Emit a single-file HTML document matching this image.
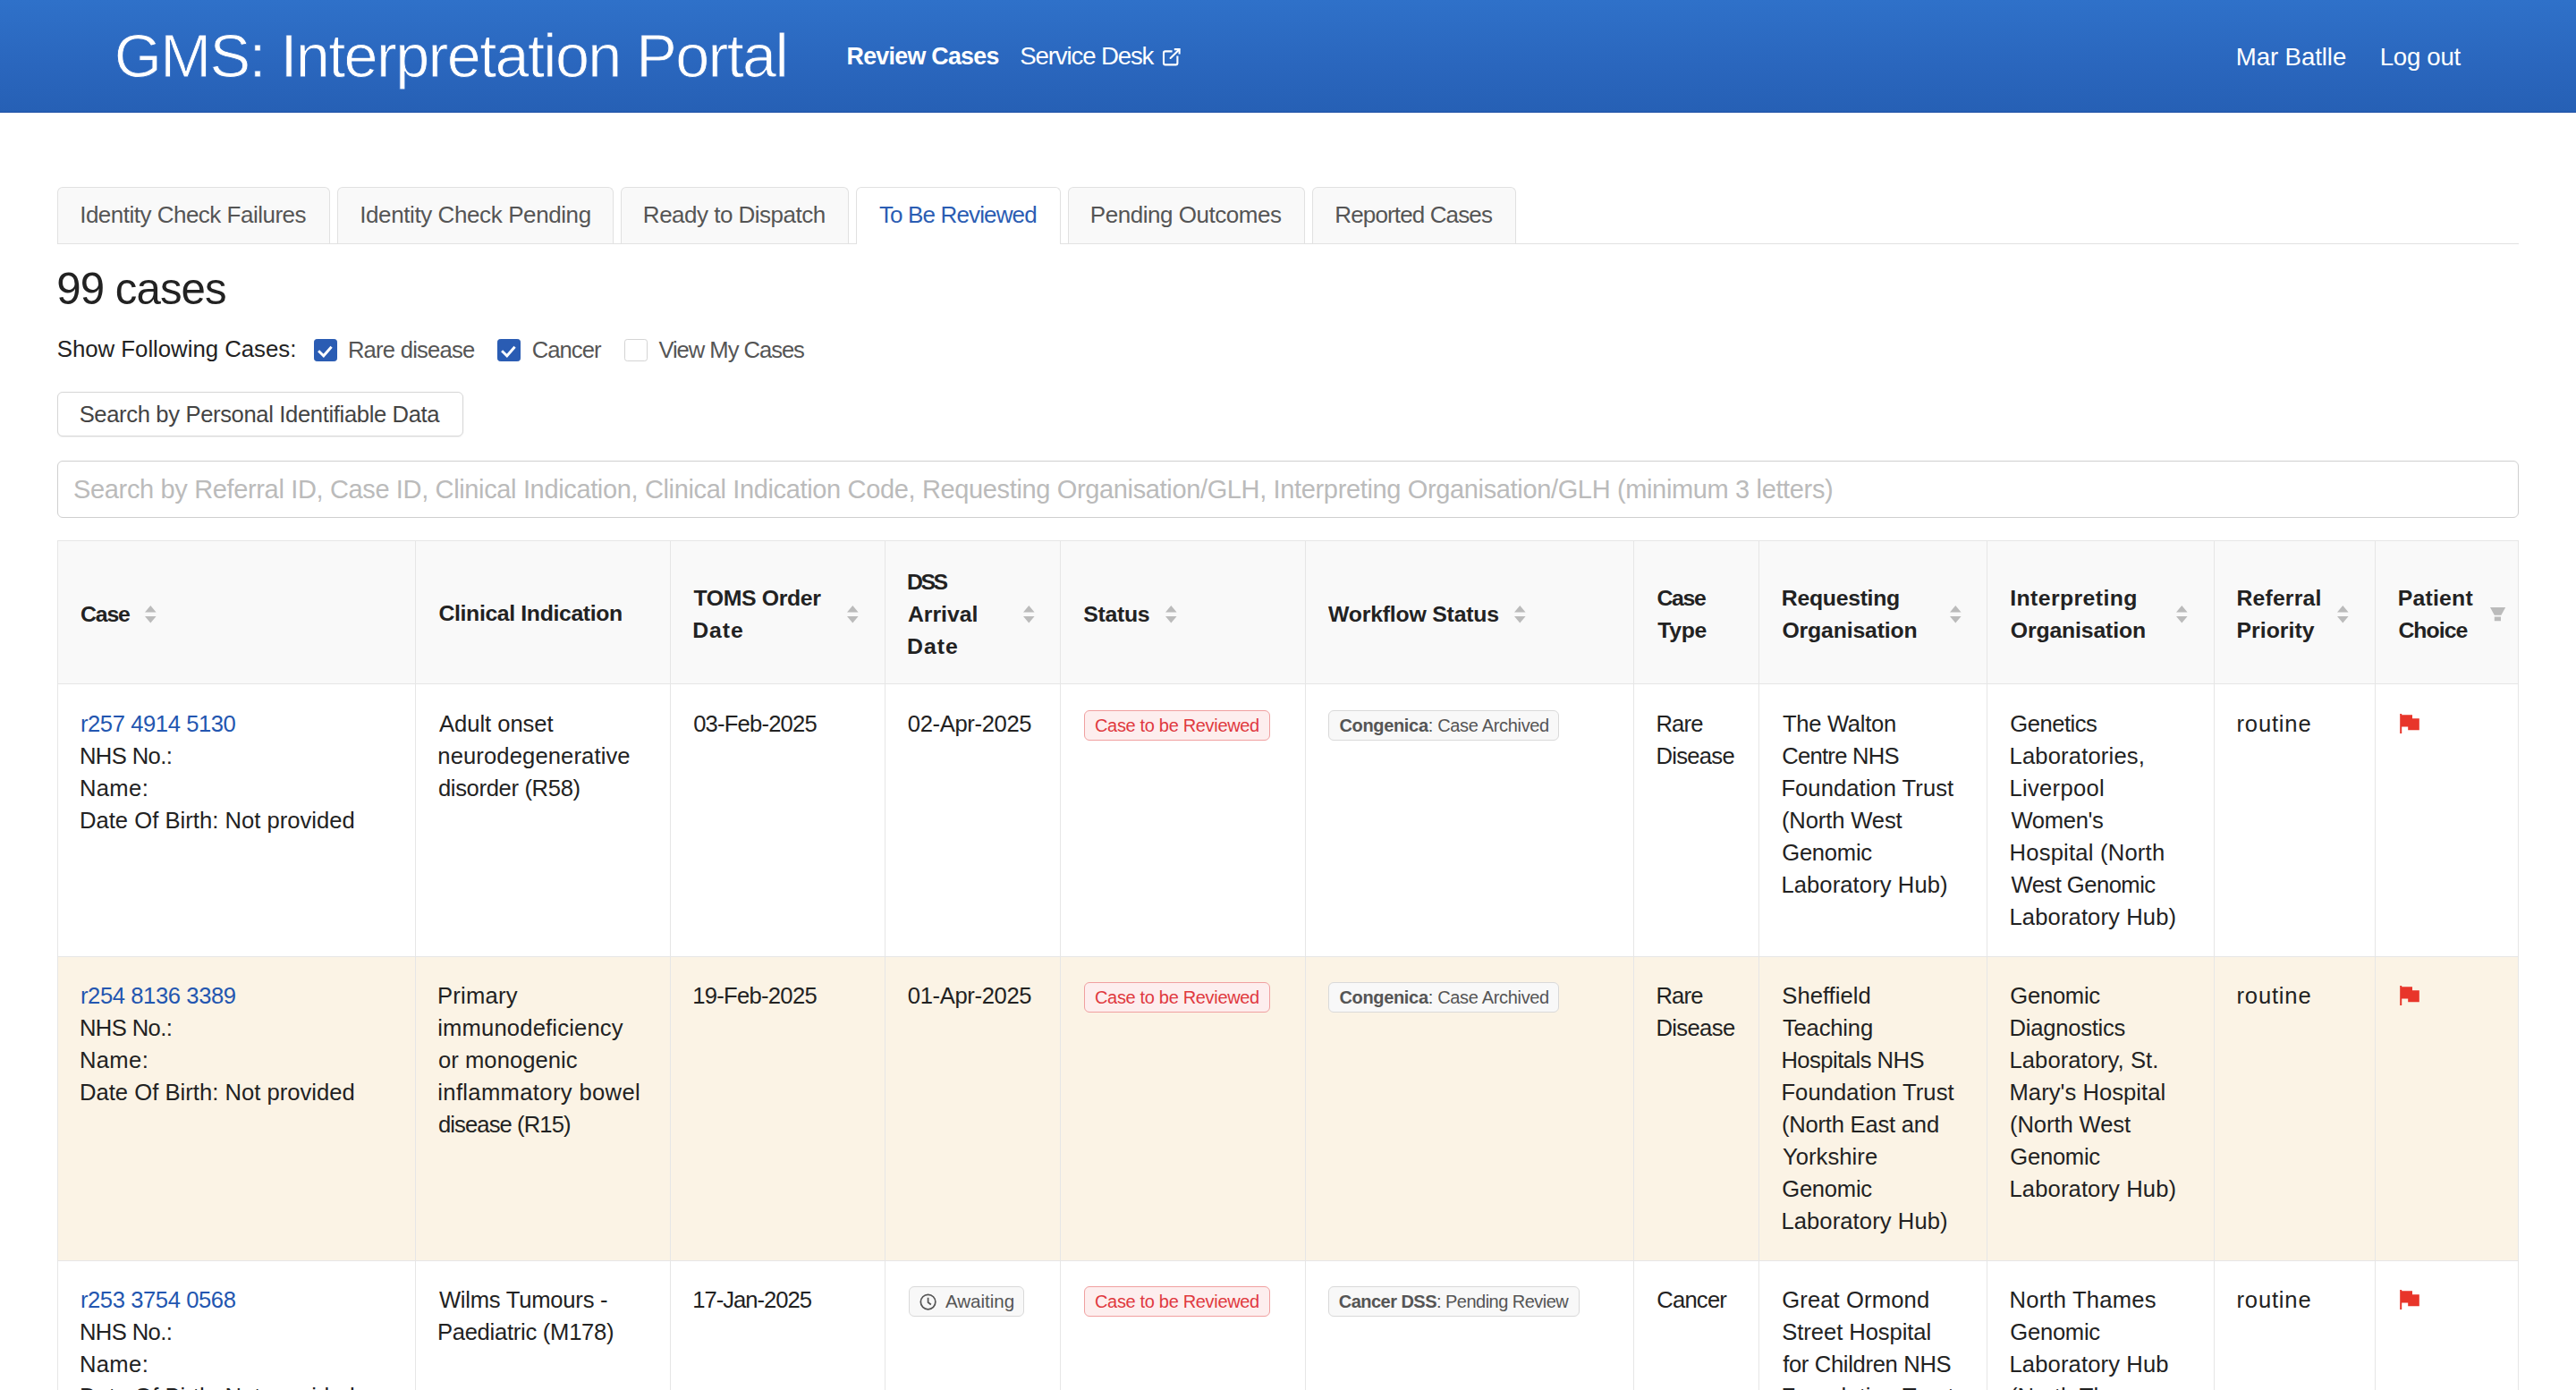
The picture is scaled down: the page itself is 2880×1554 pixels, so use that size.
<!DOCTYPE html>
<html><head><meta charset='utf-8'><title>GMS: Interpretation Portal</title><style>
html,body{margin:0;padding:0;background:#fff;}
body{width:1440px;height:777px;overflow:hidden;position:relative;font-family:"Liberation Sans",sans-serif;}
@media (min-width:2000px){html{zoom:2;}}
.t{position:absolute;white-space:nowrap;}
b{font-weight:700;}
.ic{position:absolute;overflow:visible;}
#hdr{position:absolute;left:0;top:0;width:1440px;height:62.5px;background:linear-gradient(#2f71c9,#2a66bd 60%,#2660b5);border-bottom:0.5px solid #1c4fa6;}
.tab{position:absolute;top:104.5px;height:31.5px;box-sizing:border-box;background:#f9f9f9;border:0.5px solid #e1e1e1;border-bottom:none;border-radius:3px 3px 0 0;}
.tab.act{background:#fff;height:32px;}
.cb{position:absolute;top:189.5px;width:12.9px;height:12.4px;box-sizing:border-box;border:0.5px solid #d4d4d4;border-radius:1.6px;background:#fff;}
.cb.on{background:#2a5cb3;border-color:#2a5cb3;}
.cb svg{position:absolute;left:-0.5px;top:-0.5px;}
#btn{position:absolute;left:32px;top:219px;width:227px;height:25px;box-sizing:border-box;border:0.5px solid #d6d6d6;border-radius:3px;background:#fff;box-shadow:0 0.5px 1px rgba(0,0,0,0.06);}
#inp{position:absolute;left:32px;top:257.5px;width:1376px;height:32px;box-sizing:border-box;border:0.5px solid #cfcfcf;border-radius:3px;background:#fff;}
.hl{position:absolute;left:32px;width:1376px;height:0.5px;background:#e6e6e6;}
.vl{position:absolute;top:302px;width:0.5px;height:600px;background:#e6e6e6;}
.bdg{position:absolute;height:17px;box-sizing:border-box;border-radius:3px;}
.bdg.red{background:#fdeeee;border:0.5px solid #f0a0a0;}
.bdg.grey{background:#f8f8f8;border:0.5px solid #d9d9d9;}
</style></head><body>
<div id='hdr'></div>
<svg class='ic' style='left:645px;top:22.5px' width='20' height='17.5' viewBox='0 0 20 17.5'><path d='M10.3 6.2H6.4Q5.5 6.2 5.5 7.1V12.8Q5.5 13.7 6.4 13.7H12.3Q13.2 13.7 13.2 12.8V8.7' fill='none' stroke='#fff' stroke-width='1.05'/><path d='M11.4 5.05H14.3V7.7' fill='none' stroke='#fff' stroke-width='1.05'/><path d='M14.1 5.25L9.3 10' fill='none' stroke='#fff' stroke-width='1.05' stroke-linecap='round'/></svg>
<div style='position:absolute;left:32px;top:136px;width:1376px;height:0.5px;background:#e2e2e2'></div>
<div class='tab' style='left:32px;width:152.50px'></div>
<div class='tab' style='left:188.5px;width:154.50px'></div>
<div class='tab' style='left:347px;width:127.50px'></div>
<div class='tab act' style='left:478.5px;width:114.50px'></div>
<div class='tab' style='left:597px;width:132.50px'></div>
<div class='tab' style='left:733.5px;width:114.00px'></div>
<div class='cb on' style='left:175.6px'><svg width='13' height='13' viewBox='0 0 13 13'><path d='M2.55 6.65L5.4 9.4L9.8 4.35' fill='none' stroke='#fff' stroke-width='1.45'/></svg></div>
<div class='cb on' style='left:278px'><svg width='13' height='13' viewBox='0 0 13 13'><path d='M2.55 6.65L5.4 9.4L9.8 4.35' fill='none' stroke='#fff' stroke-width='1.45'/></svg></div>
<div class='cb' style='left:349.2px'></div>
<div id='btn'></div><div id='inp'></div>
<div style='position:absolute;left:32px;top:302px;width:1376px;height:80px;background:#f9f9f9'></div>
<div style='position:absolute;left:32px;top:534.5px;width:1376px;height:170.0px;background:#fbf3e5'></div>
<div class='hl' style='top:302px'></div>
<div class='hl' style='top:382px'></div>
<div class='hl' style='top:534.5px'></div>
<div class='hl' style='top:704.5px'></div>
<div class='vl' style='left:32px'></div>
<div class='vl' style='left:232px'></div>
<div class='vl' style='left:374.5px'></div>
<div class='vl' style='left:494.5px'></div>
<div class='vl' style='left:592.5px'></div>
<div class='vl' style='left:729.5px'></div>
<div class='vl' style='left:913px'></div>
<div class='vl' style='left:983px'></div>
<div class='vl' style='left:1110.5px'></div>
<div class='vl' style='left:1237.5px'></div>
<div class='vl' style='left:1327.5px'></div>
<div class='vl' style='left:1407.5px'></div>
<svg class='ic' style='left:81.2px;top:338.35px' width='6.4' height='10' viewBox='0 0 6.4 10'><path d='M3.15 0L6.3 3.75H0Z M0 5.95H6.3L3.15 9.75Z' fill='#bbb'/></svg>
<svg class='ic' style='left:473.4px;top:338.35px' width='6.4' height='10' viewBox='0 0 6.4 10'><path d='M3.15 0L6.3 3.75H0Z M0 5.95H6.3L3.15 9.75Z' fill='#bbb'/></svg>
<svg class='ic' style='left:572.2px;top:338.35px' width='6.4' height='10' viewBox='0 0 6.4 10'><path d='M3.15 0L6.3 3.75H0Z M0 5.95H6.3L3.15 9.75Z' fill='#bbb'/></svg>
<svg class='ic' style='left:651.25px;top:338.35px' width='6.4' height='10' viewBox='0 0 6.4 10'><path d='M3.15 0L6.3 3.75H0Z M0 5.95H6.3L3.15 9.75Z' fill='#bbb'/></svg>
<svg class='ic' style='left:846.25px;top:338.35px' width='6.4' height='10' viewBox='0 0 6.4 10'><path d='M3.15 0L6.3 3.75H0Z M0 5.95H6.3L3.15 9.75Z' fill='#bbb'/></svg>
<svg class='ic' style='left:1090px;top:338.35px' width='6.4' height='10' viewBox='0 0 6.4 10'><path d='M3.15 0L6.3 3.75H0Z M0 5.95H6.3L3.15 9.75Z' fill='#bbb'/></svg>
<svg class='ic' style='left:1216.6px;top:338.35px' width='6.4' height='10' viewBox='0 0 6.4 10'><path d='M3.15 0L6.3 3.75H0Z M0 5.95H6.3L3.15 9.75Z' fill='#bbb'/></svg>
<svg class='ic' style='left:1306.5px;top:338.35px' width='6.4' height='10' viewBox='0 0 6.4 10'><path d='M3.15 0L6.3 3.75H0Z M0 5.95H6.3L3.15 9.75Z' fill='#bbb'/></svg>
<svg class='ic' style='left:1392px;top:339.5px' width='8.6' height='7.6' viewBox='0 0 8.6 7.6'><path d='M0 0H8.6L6.2 4.4H2.4Z M2.4 5.2H6V7.6H2.4Z' fill='#bbb'/></svg>
<div class='bdg red' style='left:606px;top:397.10px;width:103.8px'></div>
<div class='bdg grey' style='left:742.6px;top:397.10px;width:129px'></div>
<svg class='ic' style='left:1341.5px;top:398.95px' width='12' height='12' viewBox='0 0 12 12'><path d='M0.1 0H1.1V11H0.1Z M0.9 0.6H7V2.6H10.9V9.1H4.6V7.2H0.9Z' fill='#e8352a'/></svg>
<div class='bdg red' style='left:606px;top:549.10px;width:103.8px'></div>
<div class='bdg grey' style='left:742.6px;top:549.10px;width:129px'></div>
<svg class='ic' style='left:1341.5px;top:550.95px' width='12' height='12' viewBox='0 0 12 12'><path d='M0.1 0H1.1V11H0.1Z M0.9 0.6H7V2.6H10.9V9.1H4.6V7.2H0.9Z' fill='#e8352a'/></svg>
<div class='bdg red' style='left:606px;top:719.10px;width:103.8px'></div>
<div class='bdg grey' style='left:742.6px;top:719.10px;width:140.5px'></div>
<div class='bdg grey' style='left:508px;top:719.10px;width:64.5px'></div>
<svg class='ic' style='left:514.0px;top:722.90px' width='9.6' height='9.6' viewBox='0 0 10 10'><circle cx='5' cy='5' r='4.3' fill='none' stroke='#555' stroke-width='0.9'/><path d='M5 2.5V5.2L6.7 6.5' fill='none' stroke='#555' stroke-width='0.9'/></svg>
<svg class='ic' style='left:1341.5px;top:720.95px' width='12' height='12' viewBox='0 0 12 12'><path d='M0.1 0H1.1V11H0.1Z M0.9 0.6H7V2.6H10.9V9.1H4.6V7.2H0.9Z' fill='#e8352a'/></svg>
<div class='t' style='left:63.84px;top:9.77px;font-size:34.2px;line-height:42.75px;color:#fff;letter-spacing:-0.808px;-webkit-text-stroke:0.45px #2c69c1'>GMS: Interpretation Portal</div>
<div class='t' style='left:473.25px;top:23.31px;font-size:13.4px;line-height:16.75px;color:#fff;font-weight:700;letter-spacing:-0.357px'>Review Cases</div>
<div class='t' style='left:570.17px;top:22.92px;font-size:13.8px;line-height:17.25px;color:#fff;letter-spacing:-0.566px'>Service Desk</div>
<div class='t' style='left:1249.87px;top:23.34px;font-size:13.8px;line-height:17.25px;color:#fff;letter-spacing:-0.040px'>Mar Batlle</div>
<div class='t' style='left:1330.37px;top:23.34px;font-size:13.8px;line-height:17.25px;color:#fff;letter-spacing:-0.136px'>Log out</div>
<div class='t' style='left:44.60px;top:112.23px;font-size:13.0px;line-height:16.25px;color:#555;letter-spacing:-0.253px'>Identity Check Failures</div>
<div class='t' style='left:201.10px;top:112.23px;font-size:13.0px;line-height:16.25px;color:#555;letter-spacing:-0.201px'>Identity Check Pending</div>
<div class='t' style='left:359.43px;top:112.23px;font-size:13.0px;line-height:16.25px;color:#555;letter-spacing:-0.255px'>Ready to Dispatch</div>
<div class='t' style='left:491.46px;top:112.23px;font-size:13.0px;line-height:16.25px;color:#2b5db3;letter-spacing:-0.429px'>To Be Reviewed</div>
<div class='t' style='left:609.43px;top:112.23px;font-size:13.0px;line-height:16.25px;color:#555;letter-spacing:-0.236px'>Pending Outcomes</div>
<div class='t' style='left:746.18px;top:112.23px;font-size:13.0px;line-height:16.25px;color:#555;letter-spacing:-0.436px'>Reported Cases</div>
<div class='t' style='left:31.61px;top:145.90px;font-size:24.6px;line-height:30.75px;color:#222;letter-spacing:-0.465px'>99 cases</div>
<div class='t' style='left:31.91px;top:187.17px;font-size:12.9px;line-height:16.12px;color:#222;letter-spacing:-0.016px'>Show Following Cases:</div>
<div class='t' style='left:194.45px;top:187.46px;font-size:12.8px;line-height:16.0px;color:#555;letter-spacing:-0.381px'>Rare disease</div>
<div class='t' style='left:297.35px;top:187.46px;font-size:12.8px;line-height:16.0px;color:#555;letter-spacing:-0.461px'>Cancer</div>
<div class='t' style='left:368.19px;top:187.46px;font-size:12.8px;line-height:16.0px;color:#555;letter-spacing:-0.515px'>View My Cases</div>
<div class='t' style='left:44.32px;top:223.46px;font-size:12.8px;line-height:16.0px;color:#444;letter-spacing:-0.178px'>Search by Personal Identifiable Data</div>
<div class='t' style='left:41.04px;top:264.51px;font-size:14.5px;line-height:18.12px;color:#bbb;letter-spacing:-0.177px'>Search by Referral ID, Case ID, Clinical Indication, Clinical Indication Code, Requesting Organisation/GLH, Interpreting Organisation/GLH (minimum 3 letters)</div>
<div class='t' style='left:44.99px;top:335.45px;font-size:12.4px;line-height:15.5px;color:#222;font-weight:700;letter-spacing:-0.564px'>Case</div>
<div class='t' style='left:245.25px;top:335.05px;font-size:12.4px;line-height:15.5px;color:#222;font-weight:700;letter-spacing:-0.181px'>Clinical Indication</div>
<div class='t' style='left:387.76px;top:326.45px;font-size:12.4px;line-height:15.5px;color:#222;font-weight:700;letter-spacing:-0.177px'>TOMS Order</div>
<div class='t' style='left:387.07px;top:344.45px;font-size:12.4px;line-height:15.5px;color:#222;font-weight:700;letter-spacing:0.498px'>Date</div>
<div class='t' style='left:506.97px;top:317.45px;font-size:12.4px;line-height:15.5px;color:#222;font-weight:700;letter-spacing:-1.235px'>DSS</div>
<div class='t' style='left:507.49px;top:335.45px;font-size:12.4px;line-height:15.5px;color:#222;font-weight:700;letter-spacing:-0.021px'>Arrival</div>
<div class='t' style='left:506.97px;top:353.45px;font-size:12.4px;line-height:15.5px;color:#222;font-weight:700;letter-spacing:0.531px'>Date</div>
<div class='t' style='left:605.64px;top:335.45px;font-size:12.4px;line-height:15.5px;color:#222;font-weight:700;letter-spacing:-0.152px'>Status</div>
<div class='t' style='left:742.49px;top:335.45px;font-size:12.4px;line-height:15.5px;color:#222;font-weight:700;letter-spacing:-0.095px'>Workflow Status</div>
<div class='t' style='left:926.24px;top:326.45px;font-size:12.4px;line-height:15.5px;color:#222;font-weight:700;letter-spacing:-0.648px'>Case</div>
<div class='t' style='left:926.61px;top:344.45px;font-size:12.4px;line-height:15.5px;color:#222;font-weight:700;letter-spacing:-0.146px'>Type</div>
<div class='t' style='left:995.92px;top:326.45px;font-size:12.4px;line-height:15.5px;color:#222;font-weight:700;letter-spacing:-0.146px'>Requesting</div>
<div class='t' style='left:996.24px;top:344.45px;font-size:12.4px;line-height:15.5px;color:#222;font-weight:700;letter-spacing:-0.081px'>Organisation</div>
<div class='t' style='left:1123.57px;top:326.45px;font-size:12.4px;line-height:15.5px;color:#222;font-weight:700;letter-spacing:0.210px'>Interpreting</div>
<div class='t' style='left:1123.89px;top:344.45px;font-size:12.4px;line-height:15.5px;color:#222;font-weight:700;letter-spacing:-0.072px'>Organisation</div>
<div class='t' style='left:1250.27px;top:326.45px;font-size:12.4px;line-height:15.5px;color:#222;font-weight:700;letter-spacing:0.073px'>Referral</div>
<div class='t' style='left:1250.27px;top:344.45px;font-size:12.4px;line-height:15.5px;color:#222;font-weight:700;letter-spacing:0.008px'>Priority</div>
<div class='t' style='left:1340.37px;top:326.45px;font-size:12.4px;line-height:15.5px;color:#222;font-weight:700;letter-spacing:0.111px'>Patient</div>
<div class='t' style='left:1340.69px;top:344.45px;font-size:12.4px;line-height:15.5px;color:#222;font-weight:700;letter-spacing:-0.466px'>Choice</div>
<div class='t' style='left:44.97px;top:396.51px;font-size:12.8px;line-height:16.0px;color:#2356b0;letter-spacing:-0.209px'>r257 4914 5130</div>
<div class='t' style='left:44.45px;top:414.51px;font-size:12.8px;line-height:16.0px;color:#222;letter-spacing:-0.297px'>NHS No.:</div>
<div class='t' style='left:44.45px;top:432.51px;font-size:12.8px;line-height:16.0px;color:#222;letter-spacing:0.191px'>Name:</div>
<div class='t' style='left:44.45px;top:450.51px;font-size:12.8px;line-height:16.0px;color:#222;letter-spacing:0.013px'>Date Of Birth: Not provided</div>
<div class='t' style='left:245.47px;top:396.51px;font-size:12.8px;line-height:16.0px;color:#222;letter-spacing:-0.016px'>Adult onset</div>
<div class='t' style='left:244.65px;top:414.51px;font-size:12.8px;line-height:16.0px;color:#222;letter-spacing:0.058px'>neurodegenerative</div>
<div class='t' style='left:244.96px;top:432.51px;font-size:12.8px;line-height:16.0px;color:#222;letter-spacing:-0.170px'>disorder (R58)</div>
<div class='t' style='left:387.60px;top:396.51px;font-size:12.8px;line-height:16.0px;color:#222;letter-spacing:-0.404px'>03-Feb-2025</div>
<div class='t' style='left:507.40px;top:396.51px;font-size:12.8px;line-height:16.0px;color:#222;letter-spacing:-0.175px'>02-Apr-2025</div>
<div class='t' style='left:611.99px;top:399.63px;font-size:10.0px;line-height:12.5px;color:#e0393e;letter-spacing:-0.162px'>Case to be Reviewed</div>
<div class='t' style='left:748.69px;top:399.63px;font-size:10.0px;line-height:12.5px;color:#555;letter-spacing:-0.162px'><b>Congenica</b>: Case Archived</div>
<div class='t' style='left:925.70px;top:396.51px;font-size:12.8px;line-height:16.0px;color:#222;letter-spacing:-0.377px'>Rare</div>
<div class='t' style='left:925.70px;top:414.51px;font-size:12.8px;line-height:16.0px;color:#222;letter-spacing:-0.353px'>Disease</div>
<div class='t' style='left:996.46px;top:396.51px;font-size:12.8px;line-height:16.0px;color:#222;letter-spacing:-0.150px'>The Walton</div>
<div class='t' style='left:996.10px;top:414.51px;font-size:12.8px;line-height:16.0px;color:#222;letter-spacing:-0.361px'>Centre NHS</div>
<div class='t' style='left:995.70px;top:432.51px;font-size:12.8px;line-height:16.0px;color:#222;letter-spacing:0.023px'>Foundation Trust</div>
<div class='t' style='left:995.96px;top:450.51px;font-size:12.8px;line-height:16.0px;color:#222;letter-spacing:-0.064px'>(North West</div>
<div class='t' style='left:996.11px;top:468.51px;font-size:12.8px;line-height:16.0px;color:#222;letter-spacing:-0.123px'>Genomic</div>
<div class='t' style='left:995.70px;top:486.51px;font-size:12.8px;line-height:16.0px;color:#222;letter-spacing:0.044px'>Laboratory Hub)</div>
<div class='t' style='left:1123.66px;top:396.51px;font-size:12.8px;line-height:16.0px;color:#222;letter-spacing:-0.244px'>Genetics</div>
<div class='t' style='left:1123.25px;top:414.51px;font-size:12.8px;line-height:16.0px;color:#222;letter-spacing:0.083px'>Laboratories,</div>
<div class='t' style='left:1123.25px;top:432.51px;font-size:12.8px;line-height:16.0px;color:#222;letter-spacing:0.146px'>Liverpool</div>
<div class='t' style='left:1124.24px;top:450.51px;font-size:12.8px;line-height:16.0px;color:#222;letter-spacing:-0.164px'>Women&#x27;s</div>
<div class='t' style='left:1123.25px;top:468.51px;font-size:12.8px;line-height:16.0px;color:#222;letter-spacing:0.106px'>Hospital (North</div>
<div class='t' style='left:1124.24px;top:486.51px;font-size:12.8px;line-height:16.0px;color:#222;letter-spacing:-0.259px'>West Genomic</div>
<div class='t' style='left:1123.25px;top:504.51px;font-size:12.8px;line-height:16.0px;color:#222;letter-spacing:0.058px'>Laboratory Hub)</div>
<div class='t' style='left:1250.25px;top:396.51px;font-size:12.8px;line-height:16.0px;color:#222;letter-spacing:0.405px'>routine</div>
<div class='t' style='left:44.97px;top:548.51px;font-size:12.8px;line-height:16.0px;color:#2356b0;letter-spacing:-0.201px'>r254 8136 3389</div>
<div class='t' style='left:44.45px;top:566.51px;font-size:12.8px;line-height:16.0px;color:#222;letter-spacing:-0.297px'>NHS No.:</div>
<div class='t' style='left:44.45px;top:584.51px;font-size:12.8px;line-height:16.0px;color:#222;letter-spacing:0.191px'>Name:</div>
<div class='t' style='left:44.45px;top:602.51px;font-size:12.8px;line-height:16.0px;color:#222;letter-spacing:0.013px'>Date Of Birth: Not provided</div>
<div class='t' style='left:244.45px;top:548.51px;font-size:12.8px;line-height:16.0px;color:#222;letter-spacing:0.124px'>Primary</div>
<div class='t' style='left:244.64px;top:566.51px;font-size:12.8px;line-height:16.0px;color:#222;letter-spacing:0.081px'>immunodeficiency</div>
<div class='t' style='left:244.96px;top:584.51px;font-size:12.8px;line-height:16.0px;color:#222;letter-spacing:0.030px'>or monogenic</div>
<div class='t' style='left:244.64px;top:602.51px;font-size:12.8px;line-height:16.0px;color:#222;letter-spacing:0.174px'>inflammatory bowel</div>
<div class='t' style='left:244.96px;top:620.51px;font-size:12.8px;line-height:16.0px;color:#222;letter-spacing:-0.445px'>disease (R15)</div>
<div class='t' style='left:387.12px;top:548.51px;font-size:12.8px;line-height:16.0px;color:#222;letter-spacing:-0.357px'>19-Feb-2025</div>
<div class='t' style='left:507.40px;top:548.51px;font-size:12.8px;line-height:16.0px;color:#222;letter-spacing:-0.175px'>01-Apr-2025</div>
<div class='t' style='left:611.99px;top:551.63px;font-size:10.0px;line-height:12.5px;color:#e0393e;letter-spacing:-0.162px'>Case to be Reviewed</div>
<div class='t' style='left:748.69px;top:551.63px;font-size:10.0px;line-height:12.5px;color:#555;letter-spacing:-0.162px'><b>Congenica</b>: Case Archived</div>
<div class='t' style='left:925.70px;top:548.51px;font-size:12.8px;line-height:16.0px;color:#222;letter-spacing:-0.377px'>Rare</div>
<div class='t' style='left:925.70px;top:566.51px;font-size:12.8px;line-height:16.0px;color:#222;letter-spacing:-0.311px'>Disease</div>
<div class='t' style='left:996.17px;top:548.51px;font-size:12.8px;line-height:16.0px;color:#222;letter-spacing:0.010px'>Sheffield</div>
<div class='t' style='left:996.46px;top:566.51px;font-size:12.8px;line-height:16.0px;color:#222;letter-spacing:-0.089px'>Teaching</div>
<div class='t' style='left:995.70px;top:584.51px;font-size:12.8px;line-height:16.0px;color:#222;letter-spacing:-0.257px'>Hospitals NHS</div>
<div class='t' style='left:995.70px;top:602.51px;font-size:12.8px;line-height:16.0px;color:#222;letter-spacing:0.040px'>Foundation Trust</div>
<div class='t' style='left:995.96px;top:620.51px;font-size:12.8px;line-height:16.0px;color:#222;letter-spacing:-0.108px'>(North East and</div>
<div class='t' style='left:996.47px;top:638.51px;font-size:12.8px;line-height:16.0px;color:#222;letter-spacing:0.028px'>Yorkshire</div>
<div class='t' style='left:996.11px;top:656.51px;font-size:12.8px;line-height:16.0px;color:#222;letter-spacing:-0.123px'>Genomic</div>
<div class='t' style='left:995.70px;top:674.51px;font-size:12.8px;line-height:16.0px;color:#222;letter-spacing:0.044px'>Laboratory Hub)</div>
<div class='t' style='left:1123.66px;top:548.51px;font-size:12.8px;line-height:16.0px;color:#222;letter-spacing:-0.131px'>Genomic</div>
<div class='t' style='left:1123.25px;top:566.51px;font-size:12.8px;line-height:16.0px;color:#222;letter-spacing:-0.119px'>Diagnostics</div>
<div class='t' style='left:1123.25px;top:584.51px;font-size:12.8px;line-height:16.0px;color:#222;letter-spacing:0.030px'>Laboratory, St.</div>
<div class='t' style='left:1123.25px;top:602.51px;font-size:12.8px;line-height:16.0px;color:#222;letter-spacing:0.020px'>Mary&#x27;s Hospital</div>
<div class='t' style='left:1123.51px;top:620.51px;font-size:12.8px;line-height:16.0px;color:#222;letter-spacing:-0.044px'>(North West</div>
<div class='t' style='left:1123.66px;top:638.51px;font-size:12.8px;line-height:16.0px;color:#222;letter-spacing:-0.131px'>Genomic</div>
<div class='t' style='left:1123.25px;top:656.51px;font-size:12.8px;line-height:16.0px;color:#222;letter-spacing:0.058px'>Laboratory Hub)</div>
<div class='t' style='left:1250.25px;top:548.51px;font-size:12.8px;line-height:16.0px;color:#222;letter-spacing:0.405px'>routine</div>
<div class='t' style='left:44.97px;top:718.51px;font-size:12.8px;line-height:16.0px;color:#2356b0;letter-spacing:-0.205px'>r253 3754 0568</div>
<div class='t' style='left:44.45px;top:736.51px;font-size:12.8px;line-height:16.0px;color:#222;letter-spacing:-0.297px'>NHS No.:</div>
<div class='t' style='left:44.45px;top:754.51px;font-size:12.8px;line-height:16.0px;color:#222;letter-spacing:0.191px'>Name:</div>
<div class='t' style='left:44.45px;top:772.51px;font-size:12.8px;line-height:16.0px;color:#222;letter-spacing:0.013px'>Date Of Birth: Not provided</div>
<div class='t' style='left:245.44px;top:718.51px;font-size:12.8px;line-height:16.0px;color:#222;letter-spacing:-0.115px'>Wilms Tumours -</div>
<div class='t' style='left:244.45px;top:736.51px;font-size:12.8px;line-height:16.0px;color:#222;letter-spacing:-0.135px'>Paediatric (M178)</div>
<div class='t' style='left:387.12px;top:718.51px;font-size:12.8px;line-height:16.0px;color:#222;letter-spacing:-0.495px'>17-Jan-2025</div>
<div class='t' style='left:528.48px;top:720.94px;font-size:10.3px;line-height:12.88px;color:#555;letter-spacing:-0.021px'>Awaiting</div>
<div class='t' style='left:611.99px;top:721.63px;font-size:10.0px;line-height:12.5px;color:#e0393e;letter-spacing:-0.162px'>Case to be Reviewed</div>
<div class='t' style='left:748.39px;top:721.63px;font-size:10.0px;line-height:12.5px;color:#555;letter-spacing:-0.264px'><b>Cancer DSS</b>: Pending Review</div>
<div class='t' style='left:926.10px;top:718.51px;font-size:12.8px;line-height:16.0px;color:#222;letter-spacing:-0.381px'>Cancer</div>
<div class='t' style='left:996.11px;top:718.51px;font-size:12.8px;line-height:16.0px;color:#222;letter-spacing:0.061px'>Great Ormond</div>
<div class='t' style='left:996.17px;top:736.51px;font-size:12.8px;line-height:16.0px;color:#222;letter-spacing:-0.036px'>Street Hospital</div>
<div class='t' style='left:996.57px;top:754.51px;font-size:12.8px;line-height:16.0px;color:#222;letter-spacing:-0.164px'>for Children NHS</div>
<div class='t' style='left:995.70px;top:772.51px;font-size:12.8px;line-height:16.0px;color:#222;letter-spacing:0.040px'>Foundation Trust</div>
<div class='t' style='left:996.11px;top:790.51px;font-size:12.8px;line-height:16.0px;color:#222;letter-spacing:-0.123px'>Genomic</div>
<div class='t' style='left:1123.25px;top:718.51px;font-size:12.8px;line-height:16.0px;color:#222;letter-spacing:0.102px'>North Thames</div>
<div class='t' style='left:1123.66px;top:736.51px;font-size:12.8px;line-height:16.0px;color:#222;letter-spacing:-0.131px'>Genomic</div>
<div class='t' style='left:1123.25px;top:754.51px;font-size:12.8px;line-height:16.0px;color:#222;letter-spacing:0.063px'>Laboratory Hub</div>
<div class='t' style='left:1123.51px;top:772.51px;font-size:12.8px;line-height:16.0px;color:#222'>(North Thames</div>
<div class='t' style='left:1123.66px;top:790.51px;font-size:12.8px;line-height:16.0px;color:#222;letter-spacing:-0.131px'>Genomic</div>
<div class='t' style='left:1250.25px;top:718.51px;font-size:12.8px;line-height:16.0px;color:#222;letter-spacing:0.405px'>routine</div>
</body></html>
